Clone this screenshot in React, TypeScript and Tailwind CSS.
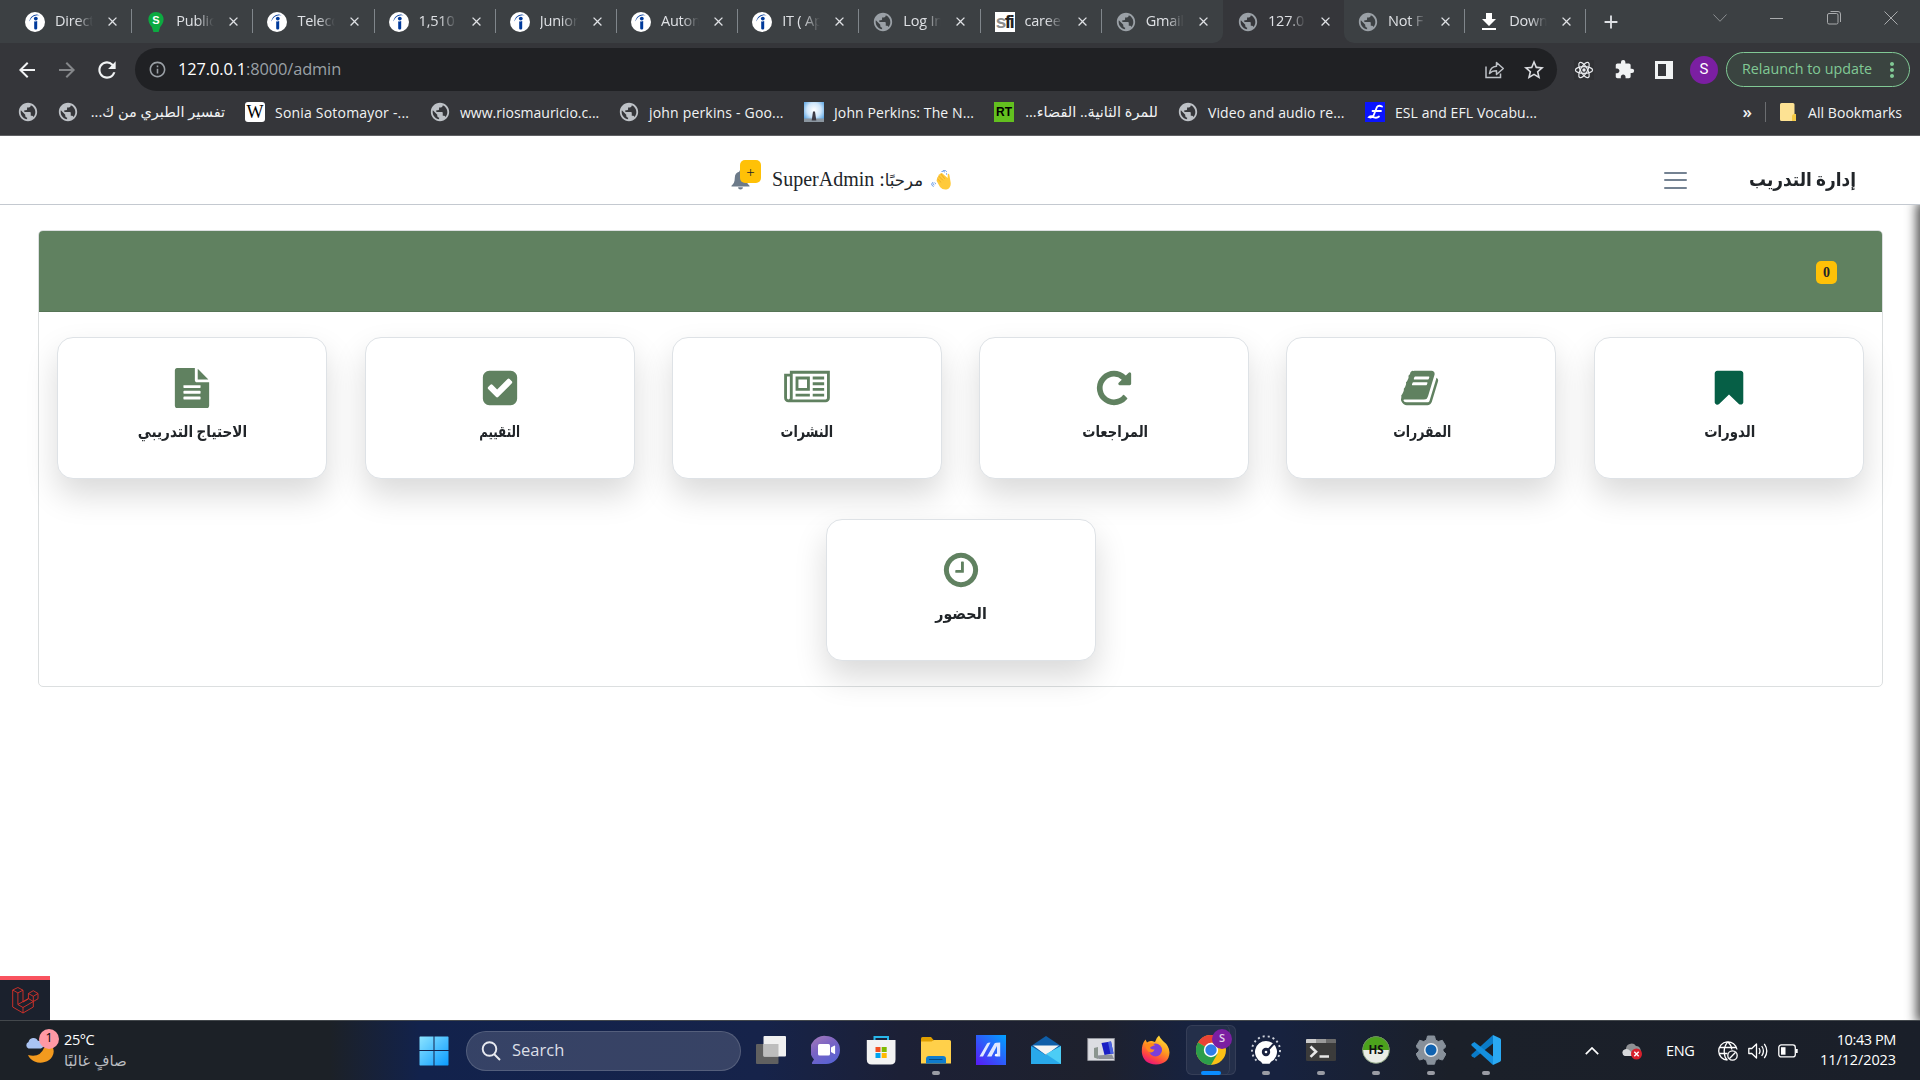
import React from "react";
import {
  MdArrowBack,
  MdArrowForward,
  MdRefresh,
  MdPublic,
  MdClose,
  MdAdd,
  MdDownload,
  MdStarBorder,
  MdExtension,
  MdInfoOutline,
  MdMoreVert,
} from "react-icons/md";

const UI = "font-['Open_Sans','DejaVu_Sans',sans-serif]";

/* ---------- favicons ---------- */

const Globe = ({ className = "text-[#bdc1c6]" }: { className?: string }) => (
  <MdPublic className={`-m-px size-[22px] shrink-0 ${className}`} />
);

const Indeed = () => (
  <svg viewBox="0 0 20 20" className="size-5">
    <circle cx="10" cy="10" r="10" fill="#fff" />
    <circle cx="10.800" cy="6.600" r="1.900" fill="#003a9b" />
    <path d="M9.200 9.300c1 .4 2 .3 3-.2V16.300c0 .9-.6 1.300-1.500 1.300s-1.500-.5-1.500-1.300z" fill="#003a9b" />
    <path d="M4.300 9.500C5 5.500 8 2.500 12 2.600c1.200.1 2.100.6 2.700 1.100C10.500 2.300 6.500 4.500 4.300 9.500z" fill="#003a9b" />
  </svg>
);

const Pin = () => (
  <svg viewBox="0 0 20 20" className="size-5">
    <path d="M10 0c4.400 0 7.600 3.200 7.600 7.400 0 3.400-2 5.400-3.400 7.600L12.600 20H7.400L5.800 15C4.400 12.800 2.400 10.800 2.400 7.400 2.400 3.200 5.600 0 10 0z" fill="#0caa41" />
    <text x="10" y="12" textAnchor="middle" fontSize="11" fontWeight="700" fontFamily="Liberation Sans, sans-serif" fill="#fff">S</text>
  </svg>
);

const Sfi = () => (
  <span className="relative flex h-5 w-5 items-center justify-center bg-white font-['Liberation_Sans',sans-serif] text-[19px] font-bold leading-[20px] tracking-[-1.500px] text-[#8d8d8d]">
    s<span className="text-[#222]">fi</span>
  </span>
);

const Wiki = () => (
  <span className="flex size-5 items-center justify-center rounded-[3px] bg-white font-['Liberation_Serif',serif] text-[18px] leading-none text-black">
    W
  </span>
);

const Figure = () => (
  <svg viewBox="0 0 20 20" className="size-5">
    <defs>
      <radialGradient id="sky" cx=".5" cy=".4" r=".7">
        <stop offset="0" stopColor="#fff" />
        <stop offset=".5" stopColor="#cfe6fa" />
        <stop offset="1" stopColor="#3d94dd" />
      </radialGradient>
    </defs>
    <rect width="20" height="20" fill="url(#sky)" />
    <rect y="16.500" width="20" height="3.500" fill="#8b96a0" />
    <path d="M9 9.500h2l1.300 9H7.700z" fill="#3c3a44" />
  </svg>
);

const Rt = () => (
  <span className="flex size-5 items-center justify-center bg-[#63c01f] font-['Liberation_Sans',sans-serif] text-[12px] font-black leading-none text-black">
    RT
  </span>
);

const Esl = () => (
  <svg viewBox="0 0 20 20" className="size-5">
    <rect width="20" height="20" fill="#0a14ff" />
    <path d="M17 4.500q-3.500-1.800-5 0.500L8.500 13.500q-1.500 2.700-4.500 1.700 2-2 5 .2 3 1 5-.9M7.500 9h8.500" fill="none" stroke="#fff" strokeWidth="1.800" strokeLinecap="round" />
  </svg>
);

/* ---------- browser chrome ---------- */

type TabInfo = { icon: React.ReactNode; title: string; edge?: boolean };

const tabs: TabInfo[] = [
  { icon: <Indeed />, title: "Direct" },
  { icon: <Pin />, title: "Public" },
  { icon: <Indeed />, title: "Teleco" },
  { icon: <Indeed />, title: "1,510" },
  { icon: <Indeed />, title: "Junior" },
  { icon: <Indeed />, title: "Autom" },
  { icon: <Indeed />, title: "IT ( Ap" },
  { icon: <Globe className="text-[#9aa0a6]" />, title: "Log In" },
  { icon: <Sfi />, title: "caree" },
  { icon: <Globe className="text-[#9aa0a6]" />, title: "Gmail", edge: true },
  { icon: <Globe className="text-[#9aa0a6]" />, title: "127.0", edge: true },
  { icon: <Globe className="text-[#9aa0a6]" />, title: "Not F" },
  { icon: <MdDownload className="-m-0.5 size-6 text-white" />, title: "Down" },
];

const Tab = ({ icon, title, edge }: TabInfo) => (
  <div className="relative flex h-[43px] w-[121.200px] shrink-0 items-center pl-[15px]">
    <span className="flex size-5 shrink-0 items-center justify-center">{icon}</span>
    <span className="ml-[10px] w-[38px] overflow-hidden whitespace-nowrap pb-[2px] text-[14.500px] tracking-[-0.2px] text-[#dfe1e5] [mask-image:linear-gradient(90deg,#000_55%,transparent)]">{title}</span>
    <MdClose className="ml-[12px] size-[15px] shrink-0 text-[#dfe1e5]" />
    {!edge && <span className="absolute right-[-1px] top-[9px] h-6 w-px bg-[#80868b]" />}
  </div>
);

const TabStrip = () => (
  <div className="flex h-[43px] w-full bg-[#35363a]">
    <div className="flex w-[1223px] rounded-br-[10px] bg-[#3c4043] pl-[10px]">
      {tabs.slice(0, 10).map((t, i) => (
        <Tab key={i} {...t} />
      ))}
    </div>
    <div className="flex w-[121px] bg-[#35363a]">
      <Tab {...tabs[10]} />
    </div>
    <div className="flex flex-1 rounded-bl-[10px] bg-[#3c4043]">
      <div className="-ml-px flex">
        {tabs.slice(11).map((t, i) => (
          <Tab key={i} {...t} />
        ))}
      </div>
      <div className="flex w-[52px] items-center justify-center">
        <MdAdd className="size-[22px] text-[#dfe1e5]" />
      </div>
      <div className="ml-auto flex h-9 w-[229px] items-center">
        <div className="flex w-[57px] justify-center">
          <svg viewBox="0 0 14 8" className="h-2 w-[14px]" fill="none" stroke="#8b8e91"><path d="M.5.5 7 7.300 13.500.5" /></svg>
        </div>
        <div className="flex w-[57px] justify-center"><div className="h-px w-[13px] bg-[#a9abad]" /></div>
        <div className="flex w-[57px] justify-center">
          <svg viewBox="0 0 14 14" className="size-[14px]" fill="none" stroke="#a9abad"><rect x=".5" y="2.500" width="10.500" height="10.500" rx="1.500" /><path d="M3.500.5h7.500a2.500 2.500 0 0 1 2.500 2.500v8" /></svg>
        </div>
        <div className="flex w-[57px] justify-center">
          <svg viewBox="0 0 14 14" className="size-[14px]" fill="none" stroke="#a9abad"><path d="M.5.5l13 13M13.500.5l-13 13" /></svg>
        </div>
      </div>
    </div>
  </div>
);

const ReactLogo = () => (
  <svg viewBox="0 0 20 20" className="size-5 bg-[#303134]" fill="none" stroke="#e8eaed" strokeWidth="1.200">
    <ellipse cx="10" cy="10" rx="8.600" ry="3.400" />
    <ellipse cx="10" cy="10" rx="8.600" ry="3.400" transform="rotate(60 10 10)" />
    <ellipse cx="10" cy="10" rx="8.600" ry="3.400" transform="rotate(120 10 10)" />
    <circle cx="10" cy="10" r="1.700" fill="#e8eaed" stroke="none" />
  </svg>
);

const Toolbar = () => (
  <div className="flex h-[53px] w-full items-center bg-[#35363a] pl-[7px] pr-[10px]">
    <div className="flex w-10 justify-center"><MdArrowBack className="size-[24px] text-[#f1f3f4]" /></div>
    <div className="flex w-10 justify-center"><MdArrowForward className="size-[24px] text-[#85878a]" /></div>
    <div className="flex w-10 justify-center"><MdRefresh className="size-[26px] text-[#f1f3f4]" /></div>
    <div className="ml-[8px] flex h-[43px] w-[1422px] items-center rounded-full bg-[#202124] pl-[13px] pr-[11px]">
      <MdInfoOutline className="size-[19px] text-[#9aa0a6]" />
      <span className="ml-[11px] text-[16.400px] tracking-[-0.120px] text-white">
        127.0.0.1<span className="text-[#9aa0a6]">:8000/admin</span>
      </span>
      <svg viewBox="0 0 20 20" className="ml-auto size-5" fill="none" stroke="#bdc1c6" strokeWidth="1.500">
        <path d="M1 6.500V17.500h14.500V13.500" />
        <path d="M4.500 13.500c.5-4.500 3-7 7-7.300V2.500l6.800 6-6.800 6v-3.700c-3 0-5.200.7-7 2.700z" strokeLinejoin="round" />
      </svg>
      <MdStarBorder className="ml-[17px] size-6 text-[#dadce0]" />
    </div>
    <div className="ml-[17px] flex items-center gap-[20px]">
      <ReactLogo />
      <MdExtension className="size-[21px] text-[#f1f3f4]" />
      <span className="flex h-[18px] w-[18px] border-[3px] border-r-[7px] border-[#f1f3f4]" />
    </div>
    <span className="ml-[17px] flex size-7 items-center justify-center rounded-full bg-[#7b1fa2] font-['Roboto',sans-serif] text-[15px] text-white">S</span>
    <div className="ml-auto flex h-[35px] w-[184px] items-center rounded-full border-[1.500px] border-[#81c995] bg-[#3a4440] pl-[15px]">
      <span className="w-[132px] whitespace-nowrap pb-[2px] text-[14.300px] text-[#81c995]">Relaunch to update</span>
      <MdMoreVert className="ml-[6px] size-6 text-[#81c995]" />
    </div>
  </div>
);

const Bookmark = ({ icon, label, box, rtl }: { icon: React.ReactNode; label?: string; box?: string; rtl?: boolean }) => (
  <div className="flex h-full shrink-0 items-center">
    <span className="flex size-5 items-center justify-center">{icon}</span>
    {label && (
      <span dir={rtl ? "rtl" : "ltr"} className={`ml-[10px] whitespace-nowrap ${box ?? ""}`}>
        {label}
      </span>
    )}
  </div>
);

const BookmarksBar = () => (
  <div className="flex h-[40px] w-full items-center gap-5 border-b border-[#5f6063] bg-[#35363a] pb-[7px] pl-[18px] pr-[18px] text-[14px] text-[#f1f3f4]">
    <Bookmark icon={<Globe />} />
    <Bookmark icon={<Globe />} label="تفسير الطبري من ك..." rtl box="w-[137px] text-[14.500px]" />
    <Bookmark icon={<Wiki />} label="Sonia Sotomayor -..." box="w-[135px] tracking-[0.200px]" />
    <Bookmark icon={<Globe />} label="www.riosmauricio.c..." box="w-[139px]" />
    <Bookmark icon={<Globe />} label="john perkins - Goo..." box="w-[135px] tracking-[0.180px]" />
    <Bookmark icon={<Figure />} label="John Perkins: The N..." box="w-[140px] tracking-[0.100px]" />
    <Bookmark icon={<Rt />} label="للمرة الثانية.. القضاء..." rtl box="w-[134px] text-[14.500px]" />
    <Bookmark icon={<Globe />} label="Video and audio re..." box="w-[137px] tracking-[0.120px]" />
    <Bookmark icon={<Esl />} label="ESL and EFL Vocabu..." box="w-[143px] tracking-[0.080px]" />
    <div className="ml-auto flex items-center">
      <span className="text-[17px] font-semibold">»</span>
      <span className="ml-[13px] h-5 w-px bg-[#6b6d70]" />
      <svg viewBox="0 0 16 18" className="ml-[14px] h-[18px] w-4"><path d="M0 1.500Q0 0 1.500 0H13q1.500 0 1.500 1.500V11H16v7H1.500Q0 18 0 16.500z" fill="#fde293" /><path d="M12 18v-4.500q0-2.500 2.500-2.500H16v5.500q0 1.500-1.500 1.500z" fill="#f4c944" /></svg>
      <span className="ml-3 w-[94px] whitespace-nowrap tracking-[0.060px]">All Bookmarks</span>
    </div>
  </div>
);

/* ---------- page ---------- */

const icons: Record<string, { box: string; cls: string; d: string }> = {
  bookmark: {
    box: "0 0 1792 1792",
    cls: "size-10 text-[#065f46]",
    d: "M1420 128q23 0 44 9 33 13 52.500 41t19.500 62v1289q0 34-19.500 62t-52.500 41q-19 8-44 8-48 0-83-32l-441-424-441 424q-36 33-83 33-23 0-44-9-33-13-52.500-41t-19.500-62v-1289q0-34 19.500-62t52.500-41q21-9 44-9h1048z",
  },
  book: {
    box: "0 0 1792 1792",
    cls: "size-10 text-[#608160]",
    d: "M1639 478q40 57 18 129l-275 906q-19 64-76.500 107.500t-122.500 43.500h-923q-77 0-148.500-53.500t-99.500-131.500q-24-67-2-127 0-4 3-27t4-37q1-8-3-21.500t-3-19.500q2-11 8-21t16.500-23.500 16.500-23.500q23-38 45-91.500t30-91.500q3-10 .5-30t-.5-28q3-11 17-28t17-23q21-36 42-92t25-90q1-9-2.500-32t.5-28q4-13 22-30.500t22-22.500q19-26 42.500-84.500t27.500-96.500q1-8-3-25.500t-2-26.500q2-8 9-18t18-23 17-21q8-12 16.500-30.500t15-35 16-36 19.500-32 26.500-23.500 36-11.500 47.500 5.500l-1 3q38-9 51-9h761q74 0 114 56t18 130l-274 906q-36 119-71.500 153.500t-128.500 34.500h-869q-27 0-38 15-11 16-1 43 24 70 144 70h923q29 0 56-15.500t35-41.500l300-987q7-22 5-57 38 15 59 43zm-1064 2q-4 13 2 22.500t20 9.500h608q13 0 25.500-9.500t16.500-22.500l21-64q4-13-2-22.500t-20-9.500h-608q-13 0-25.500 9.500t-16.500 22.500zm-83 256q-4 13 2 22.500t20 9.500h608q13 0 25.500-9.500t16.500-22.500l21-64q4-13-2-22.500t-20-9.500h-608q-13 0-25.500 9.500t-16.500 22.500z",
  },
  repeat: {
    box: "0 0 1792 1792",
    cls: "size-10 text-[#608160]",
    d: "M1664 256v448q0 26-19 45t-45 19h-448q-42 0-59-40-17-39 14-69l138-138q-148-137-349-137-104 0-198.500 40.500t-163.500 109.500-109.500 163.500-40.500 198.500 40.500 198.500 109.500 163.500 163.500 109.500 198.500 40.500q119 0 225-52t179-147q7-10 23-12 15 0 25 9l137 138q9 8 9.500 20.500t-7.500 22.500q-109 132-264 204.500t-327 72.500q-156 0-298-61t-245-164-164-245-61-298 61-298 164-245 245-164 298-61q147 0 284.500 55.500t244.500 156.500l130-129q29-31 70-14 39 17 39 59z",
  },
  newspaper: {
    box: "0 0 2048 1792",
    cls: "h-10 w-[46px] text-[#608160]",
    d: "M1024 512h-384v384h384v-384zm128 640v128h-640v-128h640zm0-768v640h-640v-640h640zm640 768v128h-512v-128h512zm0-256v128h-512v-128h512zm0-256v128h-512v-128h512zm0-256v128h-512v-128h512zm-1536 960v-960h-128v960q0 26 19 45t45 19 45-19 19-45zm1664 0v-1088h-1536v1088q0 33-11 64h1483q26 0 45-19t19-45zm128-1216v1216q0 80-56 136t-136 56h-1664q-80 0-136-56t-56-136v-1088h256v-128h1792z",
  },
  check: {
    box: "0 0 1792 1792",
    cls: "size-10 text-[#608160]",
    d: "M813 1299l614-614q19-19 19-45t-19-45l-102-102q-19-19-45-19t-45 19l-467 467-211-211q-19-19-45-19t-45 19l-102 102q-19 19-19 45t19 45l358 358q19 19 45 19t45-19zm851-883v960q0 119-84.500 203.500t-203.500 84.500h-960q-119 0-203.500-84.500t-84.500-203.500v-960q0-119 84.500-203.500t203.500-84.500h960q119 0 203.500 84.500t84.500 203.500z",
  },
  file: {
    box: "0 0 1792 1792",
    cls: "size-10 text-[#608160]",
    d: "M1596 476q14 14 28 36h-472v-472q22 14 36 28zm-476 164h544v1056q0 40-28 68t-68 28h-1344q-40 0-68-28t-28-68v-1600q0-40 28-68t68-28h800v544q0 40 28 68t68 28zm160 736v-64q0-14-9-23t-23-9h-704q-14 0-23 9t-9 23v64q0 14 9 23t23 9h704q14 0 23-9t9-23zm0-256v-64q0-14-9-23t-23-9h-704q-14 0-23 9t-9 23v64q0 14 9 23t23 9h704q14 0 23-9t9-23zm0-256v-64q0-14-9-23t-23-9h-704q-14 0-23 9t-9 23v64q0 14 9 23t23 9h704q14 0 23-9t9-23z",
  },
  clock: {
    box: "0 0 1792 1792",
    cls: "size-10 text-[#608160]",
    d: "M1024 544v448q0 14-9 23t-23 9h-320q-14 0-23-9t-9-23v-64q0-14 9-23t23-9h224v-352q0-14 9-23t23-9h64q14 0 23 9t9 23zm416 352q0-148-73-273t-198-198-273-73-273 73-198 198-73 273 73 273 198 198 273 73 273-73 198-198 73-273zm224 0q0 209-103 385.500t-279.500 279.500-385.500 103-385.500-103-279.500-279.500-103-385.500 103-385.500 279.500-279.500 385.500-103 385.500 103 279.500 279.500 103 385.500z",
  },
};

const cards = [
  { icon: "bookmark", label: "الدورات", squeeze: "scale-x-[0.83]" },
  { icon: "book", label: "المقررات", squeeze: "scale-x-[0.78]" },
  { icon: "repeat", label: "المراجعات", squeeze: "scale-x-[0.82]" },
  { icon: "newspaper", label: "النشرات", squeeze: "scale-x-[0.8]" },
  { icon: "check", label: "التقييم", squeeze: "scale-x-[0.74]" },
  { icon: "file", label: "الاحتياج التدريبي", squeeze: "scale-x-[0.85]" },
  { icon: "clock", label: "الحضور", squeeze: "scale-x-[0.89]" },
];

const Card = ({ icon, label, squeeze }: (typeof cards)[number]) => {
  const { box, cls, d } = icons[icon];
  return (
    <div className="flex h-[182px] w-[307.300px] justify-center">
      <div className="flex h-[142px] w-[270px] flex-col items-center rounded-2xl border border-[#dee2e6] bg-white pt-[30px] shadow-[0_16px_32px_rgba(0,0,0,0.15)]">
        <svg viewBox={box} className={cls} fill="currentColor">
          <path d={d} />
        </svg>
        <span className={`ml-px mt-[12px] whitespace-nowrap text-[16px] font-bold leading-6 text-[#212529] ${squeeze}`}>{label}</span>
      </div>
    </div>
  );
};

const Wave = () => (
  <svg viewBox="0 0 20 20" className="h-5 w-5" fill="none">
    <path d="M5.800 11.200 9 17q3 3.300 7.300 2.300 3.800-2 3.400-6.500L18.300 4.600q-.6-1.300-1.500-.5l-.2 3.900L11.200 3.200q-1.200-.6-1.500.5L8 4.400q-.9.600-.4 1.600L6.500 7.200q-.7.700-.2 1.500l-.5.900q-.4.900 0 1.600z" fill="#ffca3a" />
    <path d="M9.700 3.700l4 5M7.600 6l4.300 4.300M6.300 8.700l3.900 3.800" stroke="#e59d1d" strokeWidth=".7" />
    <path d="M10.500 1.500q2-1 3.500.7M12 .3q2.500-.6 3.800 1.500M15.500 3.200q.3 1 0 1.500M1.700 12q-.4 2.200 1.700 3M.5 13.500q0 2.400 2.300 3M3.700 12.500q.2 1 1.300 1.500" stroke="#5b93e6" strokeWidth=".9" />
  </svg>
);

const Page = () => (
  <div dir="rtl" className="relative flex h-[884px] w-full flex-col overflow-hidden bg-white font-['Liberation_Serif','DejaVu_Sans',serif] text-[#212529]">
    <div className="flex h-[69px] w-full shrink-0 items-center border-b border-[#c4c9d0] pr-16 pt-[20px]">
      <span className="w-[106px] origin-right scale-x-[0.89] whitespace-nowrap text-[19px] font-bold leading-6">إدارة التدريب</span>
      <div className="mr-[63px] flex w-[23px] flex-col gap-[5.500px]">
        <span className="h-[2px] rounded bg-[#748292]" />
        <span className="h-[2px] rounded bg-[#748292]" />
        <span className="h-[2px] rounded bg-[#748292]" />
      </div>
      <div className="mr-[713px] flex items-center">
        <Wave />
        <span className="mr-2 whitespace-nowrap text-[20px] leading-6"><span className="text-[16.500px]">مرحبًا</span>: <bdi>SuperAdmin</bdi></span>
        <span className="relative mr-[22px] flex h-5 w-[19px]">
          <svg viewBox="0 0 20 20" className="h-5 w-[19px]" fill="#6c7a89">
            <path d="M10 0c.9 0 1.300.5 1.300 1.300 3 .7 4.700 3 4.700 6.200 0 4.500 1.300 6.500 3.500 8.500v.8H.5V16C2.700 14 4 12 4 7.500c0-3.200 1.700-5.500 4.700-6.200C8.700.5 9.100 0 10 0zM7.500 17.600h5c0 1.400-1.100 2.400-2.500 2.400s-2.500-1-2.500-2.400z" />
          </svg>
          <span className="absolute -top-[10px] left-[9px] flex h-[23px] w-[21px] items-center justify-center rounded-[5px] bg-[#ffc107] pt-[2px] text-[15px] leading-none">+</span>
        </span>
      </div>
    </div>
    <div className="ml-[38px] mr-[37px] mt-[25px] h-[457px] shrink-0 rounded-[5px] border border-[#dcdfe0]">
      <div className="flex h-[81px] items-center rounded-t-[4px] border-b border-[#567456] bg-[#608160] pr-[45px] pt-[3px]">
        <span className="flex h-[23px] w-[21px] items-center justify-center rounded-[5px] bg-[#ffc107] pt-px text-[14px] font-bold leading-none">0</span>
      </div>
      <div className="-ml-px -mr-px flex flex-wrap justify-center pt-[25px]">
        {cards.map((c) => (
          <Card key={c.icon} {...c} />
        ))}
      </div>
    </div>
    {/* shadow cast by the collapsed side drawer */}
    <div className="absolute -right-2 bottom-0 top-[69px] w-2 shadow-[0_0_12px_3px_rgba(0,0,0,0.75)] [clip-path:inset(0_0_0_-30px)]" />
    <div className="absolute bottom-0 left-0 flex h-11 w-[50px] items-center justify-center border-t-[4px] border-[#f9535f] bg-[#1b212d]">
      <svg viewBox="0 0 27 27" className="h-[27px] w-[27px]" fill="none" stroke="#d9322a" strokeWidth=".9" strokeLinejoin="round">
        <path d="M.7 3v17l10.300 6 10.300-6v-5.500l4.700-2.700V6.500l-4.700-2.800-4.900 2.800V12L11 15V3.200L5.900.5zM.7 3l5.200 2.900L11 3.200M5.900 5.900v11.600l10.500-6M5.900 17.500l5.100 3v5.500M11 20.500l10.300-6M16.400 6.500l4.900 2.800 4.700-2.800M21.300 9.300v5.200l-4.900-3" />
      </svg>
    </div>
  </div>
);

/* ---------- taskbar ---------- */

const Win = () => (
  <svg viewBox="0 0 30 30" className="size-[30px]">
    <defs>
      <linearGradient id="win" x1="0" y1="0" x2="1" y2="1">
        <stop offset="0" stopColor="#8ce4ff" />
        <stop offset="1" stopColor="#0a9bff" />
      </linearGradient>
    </defs>
    <path d="M1 .5h13.500V14H.5V1zM15.500.5H29l.5.5v13h-14zM.5 15h14v14.500H1l-.5-.5zM15.500 15h14v14l-.5.500H15.500z" fill="url(#win)" />
  </svg>
);

const TaskView = () => (
  <svg viewBox="0 0 30 30" className="size-[30px]">
    <rect x="0" y="9" width="22.500" height="20" rx="1" fill="#606060" />
    <rect x="7.500" y="1" width="22.500" height="20.500" rx="1" fill="#f0f0f0" />
    <rect x="7.500" y="9" width="15" height="12.500" fill="#bdbdbd" />
  </svg>
);

const Chat = () => (
  <svg viewBox="0 0 30 30" className="size-[30px]">
    <defs>
      <linearGradient id="chat" x1="0" y1="0" x2=".6" y2="1"><stop stopColor="#a77bb8" /><stop offset=".5" stopColor="#7a63c4" /><stop offset="1" stopColor="#5a63d2" /></linearGradient>
    </defs>
    <path d="M15 1a14 14 0 1 1 0 28H1.500q-1-.5-.3-1.700L3 24.500A14 14 0 0 1 15 1z" fill="url(#chat)" />
    <rect x="7" y="9" width="12" height="11.500" rx="1.500" fill="#fff" />
    <path d="M20 12.500l3.500-2q.6 0 .6.600v7.300q0 .600-.6.600l-3.500-2z" fill="#fff" />
  </svg>
);

const Store = () => (
  <svg viewBox="0 0 30 30" className="size-[30px]">
    <path d="M8.500 7V2h13.500v5" fill="none" stroke="#28b7ea" strokeWidth="2" />
    <path d="M.8 5h28.700v19.500q0 5-5 5H5.800q-5 0-5-5z" fill="#f3f3f3" />
    <path d="M9.500 12h5v5h-5z" fill="#f25022" /><path d="M15.700 12h5v5h-5z" fill="#7fba00" />
    <path d="M9.500 18h5v5h-5z" fill="#00a4ef" /><path d="M15.700 18h5v5h-5z" fill="#ffb900" />
  </svg>
);

const Explorer = () => (
  <svg viewBox="0 0 30 30" className="size-[30px]">
    <path d="M0 3.500Q0 2 1.500 2H10l3 3.500V9H0z" fill="#e09f00" />
    <path d="M0 6.500h10.500L13 5h15.500Q30 5 30 6.500V28.500H0z" fill="#ffd04a" />
    <path d="M5 28.500v-4.500q0-3 3-3h14q3 0 3 3v4.500z" fill="#0f7ccd" />
    <path d="M8 24.500h13.500" stroke="#064a80" />
  </svg>
);

const Asus = () => (
  <svg viewBox="0 0 30 30" className="size-[30px]">
    <defs><linearGradient id="asus" x1="0" y1="1" x2="1" y2="0"><stop stopColor="#5a18f5" /><stop offset="1" stopColor="#00a2ff" /></linearGradient></defs>
    <path d="M0 0h30v30H0z" fill="url(#asus)" />
    <path d="M3.500 21.500 11 8.500q.8-1 3.500-1L7 21.500zM11 21.500l7.500-13q.8-1 5.700-1v14H21V11l-5.500 10.500z" fill="#dfe8ff" />
    <circle cx="20.300" cy="20.200" r="1.400" fill="#fff" />
  </svg>
);

const Mail = () => (
  <svg viewBox="0 0 30 30" className="size-[30px]">
    <path d="M0 11 15 1l15 10-5 8H5z" fill="#0f5ea8" />
    <path d="M2 10.500h26L15 20z" fill="#f4f4f4" />
    <path d="M0 11l15 9 15-9v18H0z" fill="#29a9ea" />
    <path d="M15 19l15-8v18z" fill="#4ccdf5" />
  </svg>
);

const Remote = () => (
  <svg viewBox="0 0 30 30" className="size-[30px]">
    <rect x="1.800" y="3.500" width="26.500" height="22" fill="#dcdde2" stroke="#9a9ca3" strokeWidth=".8" />
    <path d="M8 13l4-1v12l-4-1.500z" fill="#8b958f" />
    <path d="M15.500 8l9.500-1.500 2.500 12-9 1.500z" fill="#1a1fc4" />
    <path d="M22 7l3-.5 2.500 12-3 .5z" fill="#4a63e0" />
    <path d="M11 20.500l15-1 2 4.500H12.500z" fill="#8e9299" />
  </svg>
);

const Firefox = () => (
  <svg viewBox="0 0 30 30" className="size-[30px]">
    <defs><linearGradient id="ff" x1=".8" y1="0" x2=".3" y2="1"><stop stopColor="#ffe63d" /><stop offset=".45" stopColor="#ff9a1f" /><stop offset=".75" stopColor="#ff4a3e" /><stop offset="1" stopColor="#e8127f" /></linearGradient></defs>
    <path d="M18 .5q1 2.500 4 5.500 6.500 5 6.500 11.500Q28 29 15 29.500 2 29 .8 17 .5 9 4.500 4.500L6 7.500Q8 5.500 11 6l3 1Q15 3 18 .5z" fill="url(#ff)" />
    <circle cx="14.500" cy="15" r="6.500" fill="#7a3fd9" />
    <path d="M4 10q4-3 8-1.500l2 2q-4 .5-5 2.500 2 2 4.500 1.500-1 3-4 3-4-1-5.500-7.500z" fill="#ff8a1c" />
  </svg>
);

const Chrome = () => (
  <svg viewBox="0 0 30 30" className="size-[30px]">
    <circle cx="15" cy="15" r="15" fill="#fbc116" />
    <path d="M15 15 2 7.500A15 15 0 0 1 28 7.500H15z" fill="#ea4335" />
    <path d="M15 15 2 7.500A15 15 0 0 0 15 30l6.500-11.250z" fill="#2c9e4b" />
    <circle cx="15" cy="15" r="7.200" fill="#fff" /><circle cx="15" cy="15" r="5.700" fill="#2f7de9" />
  </svg>
);

const Gauge = () => (
  <svg viewBox="0 0 30 30" className="size-[30px]">
    <path d="M5.500 25.500A14 14 0 1 1 24.500 25.500" fill="none" stroke="#cfd3dc" strokeWidth="1.900" strokeDasharray="2 3" />
    <path d="M15 6a11 11 0 0 1 5 20.800l-1.500 2h-7l-1.500-2A11 11 0 0 1 15 6z" fill="#fff" />
    <circle cx="15" cy="17" r="4.200" fill="#1a2340" /><path d="M16 16l7.500-8" stroke="#1a2340" strokeWidth="2" />
    <circle cx="15" cy="17" r="1.300" fill="#fff" />
  </svg>
);

const Terminal = () => (
  <svg viewBox="0 0 30 30" className="size-[30px]">
    <rect y="4" width="30" height="22" rx="1.200" fill="#3b3b3b" />
    <path d="M0 5q0-1 1-1h9v4H0z" fill="#ccc" /><path d="M10 4h10v4H10z" fill="#9a9a9a" /><path d="M20 4h9q1 0 1 1v3H20z" fill="#6b6b6b" />
    <path d="M4.500 11.500l5.500 5.200-5.500 5.200M13.500 21.500H23" stroke="#e6e6e6" strokeWidth="2.600" fill="none" />
  </svg>
);

const Hs = () => (
  <svg viewBox="0 0 30 30" className="size-[30px]">
    <circle cx="15" cy="15" r="13.500" fill="#e9ece6" /><path d="M1.500 15a13.500 13.500 0 0 1 27 0z" fill="#4ca31c" />
    <circle cx="15" cy="15" r="13.300" fill="none" stroke="#6b8a5c" strokeWidth=".7" />
    <text x="15" y="19" textAnchor="middle" fontSize="11.500" fontWeight="700" fontFamily="Open Sans, sans-serif" fill="#111">HS</text>
  </svg>
);

const Settings = () => (
  <svg viewBox="0 0 30 30" className="size-[30px]">
    <path d="M11.500 1h7l1 4 2.800 1.500 4-1.200L30 11.500l-3 3v1.500l3 3-3.500 6-4.200-1.200L19.500 25.500l-1 3.700h-7l-1-3.700-2.800-1.700-4.200 1.200L0 19l3-3v-1.500l-3-3 3.700-6.200 4 1.200L10.500 5z" fill="#87909a" stroke="#87909a" strokeLinejoin="round" />
    <circle cx="15" cy="15" r="7" fill="#e8ecef" /><circle cx="15" cy="15" r="5.500" fill="#0f62b0" />
  </svg>
);

const Code = () => (
  <svg viewBox="0 0 30 30" className="size-[30px]">
    <path d="M22 0l7 3.300q1 .6 1 1.700v20q0 1.100-1 1.700L22 30z" fill="#2aa9f3" />
    <path d="M22 0v8.500L3.500 23 .8 21.200q-1-1 0-2z" fill="#0a7bc8" />
    <path d="M22 30v-8.500L3.500 7 .8 8.800q-1 1 0 2z" fill="#1490df" />
  </svg>
);

const apps: { el: React.ReactNode; run?: boolean; active?: boolean }[] = [
  { el: <TaskView /> },
  { el: <Chat /> },
  { el: <Store /> },
  { el: <Explorer />, run: true },
  { el: <Asus /> },
  { el: <Mail /> },
  { el: <Remote /> },
  { el: <Firefox /> },
  { el: <Chrome />, active: true },
  { el: <Gauge />, run: true },
  { el: <Terminal />, run: true },
  { el: <Hs />, run: true },
  { el: <Settings />, run: true },
  { el: <Code />, run: true },
];

const Taskbar = () => (
  <div className="flex h-[60px] w-full items-center border-t border-[#43484c] bg-[linear-gradient(90deg,#1c2127_0,#1c2127_330px,#12224c_420px,#16234a_760px,#1c2036_900px,#1e212d_1100px,#17223f_1190px,#17223f_1280px,#1b2029_1450px,#1a1f29_1920px)] pl-[25px] pr-6 text-white">
    <div className="relative size-[30px]">
      <svg viewBox="0 0 30 30" className="size-[30px]">
        <path d="M28 12A13 11 0 1 1 3 19q12 3 16-7z" fill="#f39a1e" />
        <path d="M3.500 12.500a3.500 3.500 0 0 1 0-6.500A5 5 0 0 1 13 5a4 4 0 0 1 3 7.500z" fill="#a9c3f2" />
      </svg>
      <span className="absolute -top-[7px] left-[14px] flex h-5 w-5 items-center justify-center rounded-full bg-[#ff99a4] text-[12.500px] text-black">1</span>
    </div>
    <div className="ml-[9px] flex w-[90px] flex-col items-start pb-[2px]">
      <span className="text-[14.500px] leading-5 tracking-[-0.4px]">25°C</span>
      <span dir="rtl" className="whitespace-nowrap text-[15px] leading-5 text-[#b9bcc0]">صافٍ غالبًا</span>
    </div>
    <div className="ml-[265px]"><Win /></div>
    <div className="ml-[17px] flex h-10 w-[275px] items-center rounded-full border border-white/15 bg-white/15 pl-[14px]">
      <svg viewBox="0 0 20 20" className="size-5" fill="none" stroke="#e8eaf0" strokeWidth="1.900"><circle cx="8.500" cy="8" r="6.800" /><path d="M13 13l6 6" /></svg>
      <span className="ml-[11px] text-[16.500px] text-[#dcdfe6]">Search</span>
    </div>
    <div className="ml-[2px] flex">
      {apps.map((a, i) => (
        <div key={i} className="relative flex h-[60px] w-[55px] items-center justify-center pb-px">
          {a.active && <span className="absolute left-[3px] top-[4px] h-[50px] w-[50px] rounded-[6px] border border-white/8 bg-white/6" />}
          {a.active && <span className="absolute left-[3px] top-[4px] h-[50px] w-[44px] rounded-[6px] border-r border-white/8" />}
          <span className="relative">{a.el}</span>
          {a.active && <span className="absolute left-[29px] top-[8px] flex size-5 items-center justify-center rounded-full bg-[#7b1fa2] text-[11px] font-semibold text-white/80">S</span>}
          {a.run && <span className="absolute bottom-[6px] left-6 h-1 w-2 rounded-full bg-[#9a9ca4]" />}
          {a.active && <span className="absolute bottom-[6px] left-[18px] h-1 w-5 rounded-full bg-[#0a8cff]" />}
        </div>
      ))}
    </div>
    <div className="ml-auto flex items-center">
      <svg viewBox="0 0 14 8" className="h-2 w-[14px]" fill="none" stroke="#fff" strokeWidth="1.700"><path d="M.8 7.200 7 1l6.200 6.200" /></svg>
      <svg viewBox="0 0 20 18" className="ml-[23px] h-[18px] w-5">
        <path d="M3 14a3.500 3.500 0 0 1 1-6.500A5.500 5.500 0 0 1 14 4a4.500 4.500 0 0 1 3 8z" fill="#8f9194" />
        <path d="M3 14a3.500 3.500 0 0 1 0-6.800Q8 5.500 11 14z" fill="#d7d8da" />
        <circle cx="14.500" cy="12" r="5.500" fill="#d8202c" /><path d="M12.300 9.800l4.400 4.400m0-4.400-4.400 4.400" stroke="#fff" strokeWidth="1.400" />
      </svg>
      <span className="ml-[24px] w-[29px] text-[14.500px] tracking-[-0.3px]">ENG</span>
      <svg viewBox="0 0 20 20" className="ml-[23px] size-5" fill="none" stroke="#fff" strokeWidth="1.300">
        <path d="M19 8.500A9.200 9.200 0 1 0 9.500 19.200M1.500 6.500h17M1 12.500h8.500M9.800.8Q4.500 7 7 15.500q1 3 2.500 3.700M9.800.8q3.700 3.500 4 7.700" />
        <circle cx="14.500" cy="14.500" r="4.700" /><path d="M11.300 17.700l6.300-6.400" />
      </svg>
      <svg viewBox="0 0 20 18" className="ml-[10px] h-[18px] w-5" fill="none" stroke="#fff" strokeWidth="1.300">
        <path d="M.8 6.500v5h3L8.500 16V2L3.800 6.500zM11 6q2 3 0 6M13.700 4q3.500 5 0 10M16.300 1.800q5 7.200 0 14.400" strokeLinejoin="round" />
      </svg>
      <svg viewBox="0 0 20 14" className="ml-[10px] h-[14px] w-5" fill="none" stroke="#fff" strokeWidth="1.300">
        <rect x=".8" y=".9" width="16.500" height="12" rx="2.500" /><rect x="3" y="3.200" width="4.500" height="7.500" fill="#fff" stroke="none" /><path d="M18.800 5v4" strokeWidth="1.800" />
      </svg>
      <div className="ml-[18px] flex w-[80px] flex-col items-end whitespace-nowrap pb-[2px] text-[14.500px] leading-5 tracking-[-0.1px]">
        <span className="tracking-[-0.4px]">10:43 PM</span>
        <span>11/12/2023</span>
      </div>
    </div>
  </div>
);

export default function App() {
  return (
    <div className={`flex h-[1080px] w-[1920px] flex-col overflow-hidden ${UI}`}>
      <TabStrip />
      <Toolbar />
      <BookmarksBar />
      <Page />
      <Taskbar />
    </div>
  );
}
